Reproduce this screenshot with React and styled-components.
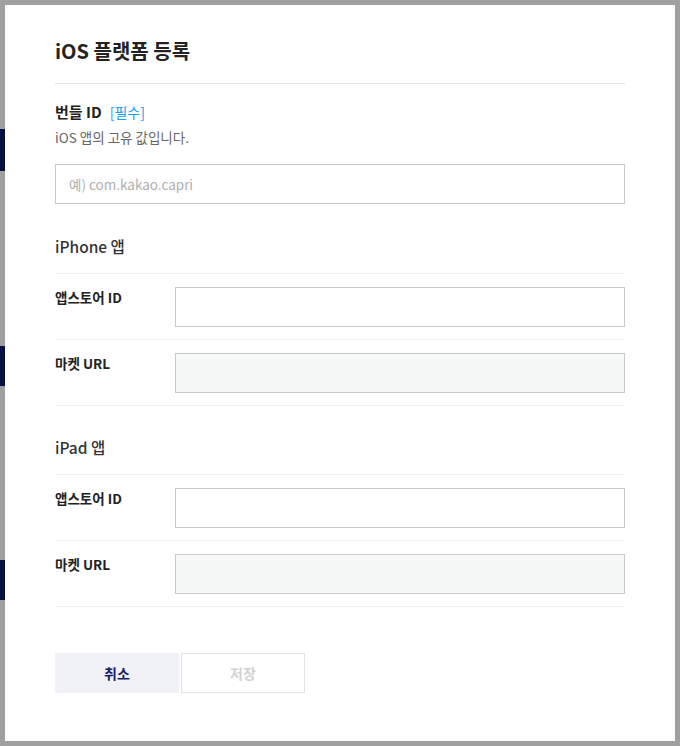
import React from 'react';
import styled, { createGlobalStyle } from 'styled-components';

const Global = createGlobalStyle`
  html, body { margin:0; padding:0; }
  body {
    background:#a0a0a0;
    font-family:"Noto Sans CJK KR", "Noto Sans", sans-serif;
    color:#222;
  }
  * { box-sizing:border-box; }
`;

const Screen = styled.div`
  width:680px;
  height:746px;
  display:flex;
  overflow:hidden;
`;

const Backdrop = styled.div`
  width:5px;
  flex:none;
  display:flex;
  flex-direction:column;
  padding-top:129px;
`;

const BehindBlock = styled.div`
  height:${p => p.$h}px;
  margin-bottom:${p => p.$gap}px;
  background:#07103f;
`;

const Modal = styled.div`
  width:670px;
  height:736px;
  margin-top:5px;
  background:#fff;
  padding:32px 50px 0;
  display:flex;
  flex-direction:column;
`;

const Title = styled.h1`
  margin:0;
  font-size:20px;
  font-weight:700;
  line-height:28px;
  color:#222;
  padding-bottom:18px;
  border-bottom:1px solid #e5e5e5;
`;

const Field = styled.div`
  padding-top:17px;
`;

const Label = styled.div`
  font-size:15px;
  font-weight:700;
  line-height:22px;
  color:#222;
  display:flex;
  align-items:baseline;
  gap:8px;
`;

const Required = styled.span`
  font-size:14px;
  font-weight:400;
  color:#1a9cf5;
`;

const Help = styled.p`
  margin:4px 0 0;
  font-size:13.5px;
  line-height:20px;
  color:#666;
`;

const TextInput = styled.input`
  display:block;
  width:100%;
  height:40px;
  border:1px solid #c8c8c8;
  background:${p => (p.disabled ? '#f6f7f7' : '#fff')};
  padding:0 13px;
  font-family:inherit;
  font-size:13.5px;
  color:#222;
  outline:none;
  &::placeholder { color:#b0b0b0; }
`;

const BundleInput = styled(TextInput)`
  margin-top:17px;
`;

const Group = styled.section`
  margin-top:${p => p.$top}px;
`;

const GroupTitle = styled.h2`
  margin:0;
  font-size:15.5px;
  font-weight:500;
  line-height:22px;
  color:#333;
  padding-bottom:16px;
  border-bottom:1px solid #eee;
`;

const Row = styled.div`
  display:grid;
  grid-template-columns:120px 1fr;
  padding:13px 0 12px;
  border-bottom:1px solid #eee;
`;

const RowLabel = styled.div`
  font-size:13.5px;
  font-weight:700;
  line-height:20px;
  color:#222;
`;

const Actions = styled.div`
  display:flex;
  gap:2px;
  margin-top:46px;
`;

const Button = styled.button`
  width:124px;
  height:40px;
  font-family:inherit;
  font-size:14px;
  font-weight:700;
  border:1px solid ${p => (p.$primary ? '#f1f2f8' : '#e2e2e2')};
  background:${p => (p.$primary ? '#f1f2f8' : '#fff')};
  color:${p => (p.$primary ? '#1b1f6b' : '#d2d2d2')};
  cursor:pointer;
`;

const AppGroup = ({ title, top }) => (
  <Group $top={top}>
    <GroupTitle>{title}</GroupTitle>
    <Row>
      <RowLabel>앱스토어 ID</RowLabel>
      <TextInput type="text" />
    </Row>
    <Row>
      <RowLabel>마켓 URL</RowLabel>
      <TextInput type="text" disabled />
    </Row>
  </Group>
);

export default function App() {
  return (
    <Screen>
      <Global />
      <Backdrop>
        <BehindBlock $h={42} $gap={175} />
        <BehindBlock $h={40} $gap={174} />
        <BehindBlock $h={40} $gap={0} />
      </Backdrop>
      <Modal>
        <Title>iOS 플랫폼 등록</Title>
        <Field>
          <Label>번들 ID <Required>[필수]</Required></Label>
          <Help>iOS 앱의 고유 값입니다.</Help>
          <BundleInput type="text" placeholder="예) com.kakao.capri" />
        </Field>
        <AppGroup title="iPhone 앱" top={31} />
        <AppGroup title="iPad 앱" top={30} />
        <Actions>
          <Button $primary>취소</Button>
          <Button disabled>저장</Button>
        </Actions>
      </Modal>
    </Screen>
  );
}
